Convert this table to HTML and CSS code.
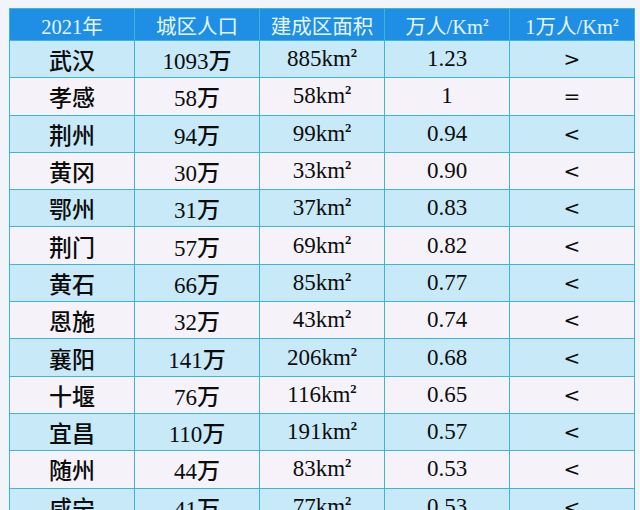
FILE: index.html
```html
<!DOCTYPE html>
<html lang="zh">
<head>
<meta charset="utf-8">
<link rel="stylesheet" href="styles.css">
</head>
<body>
<div class="page">
<table class="tbl">
<thead>
<tr><th>2021年</th><th>城区人口</th><th>建成区面积</th><th>万人/Km<sup>2</sup></th><th>1万人/Km<sup>2</sup></th></tr>
</thead>
<tbody>
<tr class="b"><td>武汉</td><td>1093万</td><td>885km<sup>2</sup></td><td>1.23</td><td class="sym">&gt;</td></tr>
<tr class="w"><td>孝感</td><td>58万</td><td>58km<sup>2</sup></td><td>1</td><td class="sym">=</td></tr>
<tr class="b"><td>荆州</td><td>94万</td><td>99km<sup>2</sup></td><td>0.94</td><td class="sym">&lt;</td></tr>
<tr class="w"><td>黄冈</td><td>30万</td><td>33km<sup>2</sup></td><td>0.90</td><td class="sym">&lt;</td></tr>
<tr class="b"><td>鄂州</td><td>31万</td><td>37km<sup>2</sup></td><td>0.83</td><td class="sym">&lt;</td></tr>
<tr class="w"><td>荆门</td><td>57万</td><td>69km<sup>2</sup></td><td>0.82</td><td class="sym">&lt;</td></tr>
<tr class="b"><td>黄石</td><td>66万</td><td>85km<sup>2</sup></td><td>0.77</td><td class="sym">&lt;</td></tr>
<tr class="w"><td>恩施</td><td>32万</td><td>43km<sup>2</sup></td><td>0.74</td><td class="sym">&lt;</td></tr>
<tr class="b"><td>襄阳</td><td>141万</td><td>206km<sup>2</sup></td><td>0.68</td><td class="sym">&lt;</td></tr>
<tr class="w"><td>十堰</td><td>76万</td><td>116km<sup>2</sup></td><td>0.65</td><td class="sym">&lt;</td></tr>
<tr class="b"><td>宜昌</td><td>110万</td><td>191km<sup>2</sup></td><td>0.57</td><td class="sym">&lt;</td></tr>
<tr class="w"><td>随州</td><td>44万</td><td>83km<sup>2</sup></td><td>0.53</td><td class="sym">&lt;</td></tr>
<tr class="b"><td>咸宁</td><td>41万</td><td>77km<sup>2</sup></td><td>0.53</td><td class="sym">&lt;</td></tr>
</tbody>
</table>
</div>
</body>
</html>
```
FILE: styles.css
```css
html, body {
  margin: 0;
  padding: 0;
  background: #f1f4f9;
  overflow: hidden;
}
.page {
  width: 640px;
  height: 510px;
  padding: 8px 0 0 9px;
  box-sizing: border-box;
  overflow: hidden;
}
.tbl {
  border-collapse: collapse;
  table-layout: fixed;
  width: 622px;
  font-family: "Liberation Serif", "Noto Sans CJK SC", serif;
  color: #0c0c0c;
}
.tbl th, .tbl td {
  border: 1.5px solid #3db6d3;
  text-align: center;
  padding: 0;
  width: 124px;
}
.tbl th {
  background: #1f8fe5;
  color: #e6f5ff;
  font-weight: normal;
  font-size: 20.5px;
  height: 31px;
}
.tbl td {
  font-size: 23px;
  font-weight: 500;
  height: 36.3px;
}
.tbl td.sym {
  font-family: "DejaVu Sans", sans-serif;
  font-size: 20px;
  font-weight: normal;
}
.tbl tr.b td {
  background: #c7e9f8;
}
.tbl tr.w td {
  background: #f5f3f9;
}
.tbl sup {
  font-size: 0.55em;
  font-weight: bold;
  vertical-align: 0.7em;
  line-height: 0;
}
```
